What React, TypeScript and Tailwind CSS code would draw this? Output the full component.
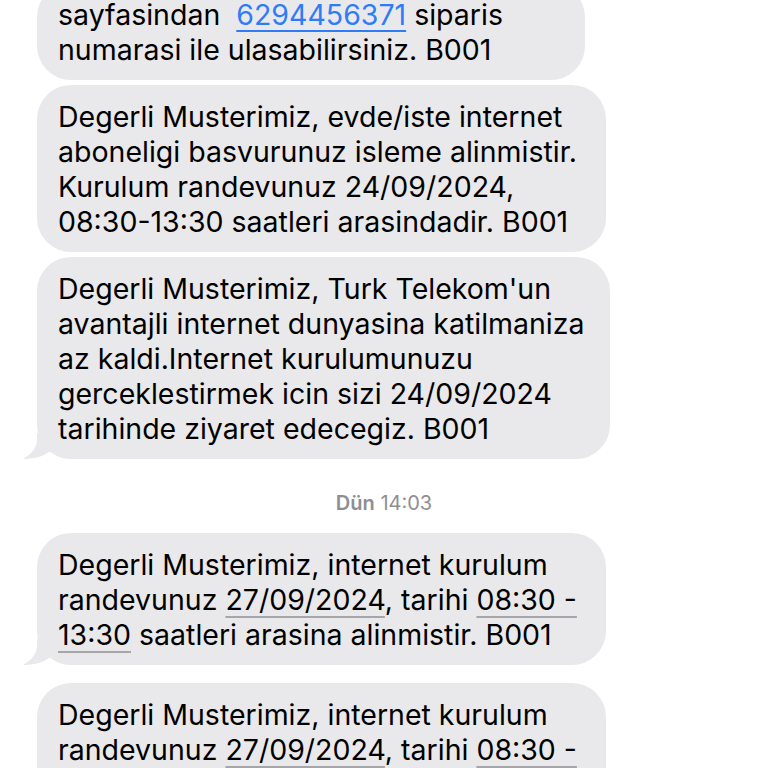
import type { ReactNode } from 'react'

const FONT = { fontFamily: 'Inter, "Liberation Sans", sans-serif' }

function Tail() {
  return (
    <svg
      className="absolute left-[-14px] bottom-0"
      width="34"
      height="26"
      viewBox="0 0 34 26"
    >
      <path d="M14 0 L14 6 C14 14 10 20 0 26 C10 26 19 24 26 19 L34 19 L34 0 Z" fill="#e9e9eb" />
    </svg>
  )
}

function Bubble({
  width,
  tail,
  className = '',
  children,
}: {
  width: string
  tail?: boolean
  className?: string
  children: ReactNode
}) {
  return (
    <div className={`relative ${width} ${className}`}>
      {tail && <Tail />}
      <div className="relative rounded-[34px] bg-[#e9e9eb] pl-[21px] pt-[14px] pb-[13px] text-[28.5px] leading-[35px] text-black whitespace-pre">
        {children}
      </div>
    </div>
  )
}

function Date({ children }: { children: ReactNode }) {
  return (
    <span className="underline decoration-[#a5a5aa] decoration-[1.5px] underline-offset-[6px]">
      {children}
    </span>
  )
}

export default function App() {
  return (
    <div className="w-[768px] h-[768px] overflow-hidden bg-white" style={FONT}>
      <div className="flex flex-col pl-[37px]">
        <Bubble width="w-[548px]" className="-mt-[17px]">
          {'sayfasindan  '}
          <span className="text-[#2f7cf6] underline decoration-[#2f7cf6] decoration-[1.5px] underline-offset-[5px]">
            6294456371
          </span>
          {' siparis\nnumarasi ile ulasabilirsiniz. B001'}
        </Bubble>

        <Bubble width="w-[569px]" className="mt-[5px]">
          {'Degerli Musterimiz, evde/iste internet\naboneligi basvurunuz isleme alinmistir.\nKurulum randevunuz 24/09/2024,\n08:30-13:30 saatleri arasindadir. B001'}
        </Bubble>

        <Bubble width="w-[573px]" className="mt-[5px]" tail>
          {"Degerli Musterimiz, Turk Telekom'un\navantajli internet dunyasina katilmaniza\naz kaldi.Internet kurulumunuzu\ngerceklestirmek icin sizi 24/09/2024\ntarihinde ziyaret edecegiz. B001"}
        </Bubble>

        <div className="mt-[32px] mb-[18px] -ml-[37px] text-center text-[20px] leading-[24px] text-[#8e8e93]">
          <span className="font-semibold">Dün</span> 14:03
        </div>

        <Bubble width="w-[569px]" tail>
          {'Degerli Musterimiz, internet kurulum\nrandevunuz '}
          <Date>27/09/2024</Date>
          {', tarihi '}
          <Date>08:30 -</Date>
          {'\n'}
          <Date>13:30</Date>
          {' saatleri arasina alinmistir. B001'}
        </Bubble>

        <Bubble width="w-[569px]" className="mt-[18px]">
          {'Degerli Musterimiz, internet kurulum\nrandevunuz '}
          <Date>27/09/2024</Date>
          {', tarihi '}
          <Date>08:30 -</Date>
          {'\n'}
          <Date>13:30</Date>
          {' saatleri arasina alinmistir. B001'}
        </Bubble>
      </div>
    </div>
  )
}
